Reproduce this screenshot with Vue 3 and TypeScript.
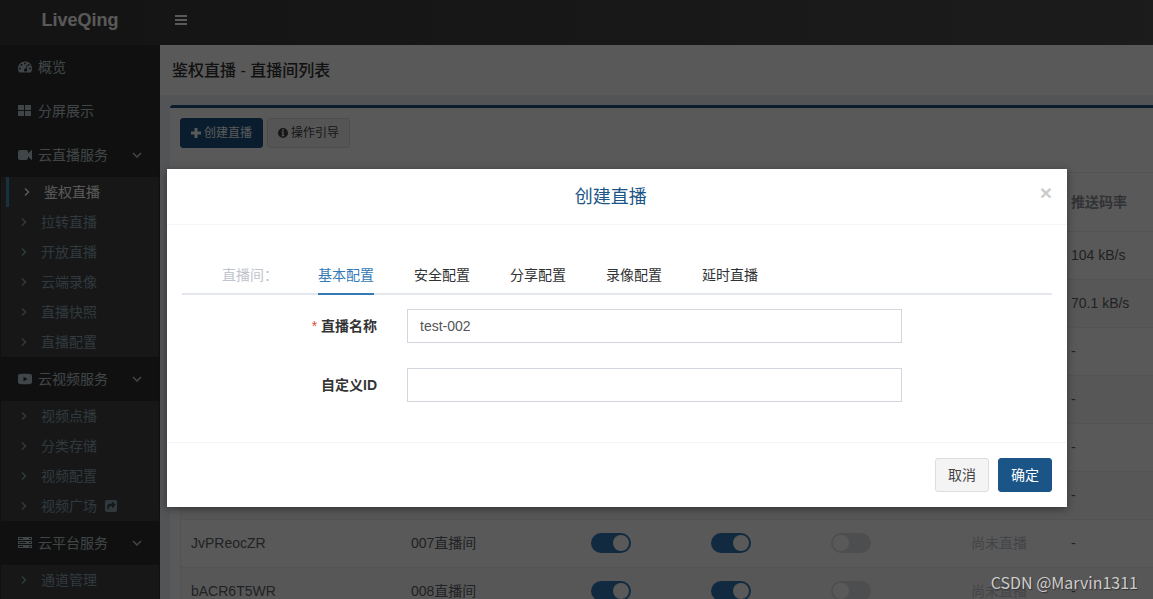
<script setup lang="ts">
import { ref } from 'vue'

interface SubItem { label: string; active?: boolean; share?: boolean }
interface MenuItem { label: string; icon: string; children?: SubItem[] }
interface Room { id: string; name: string; status: string; rate: string }

const menu: MenuItem[] = [
  { label: '概览', icon: 'dashboard' },
  { label: '分屏展示', icon: 'grid' },
  {
    label: '云直播服务', icon: 'camera', children: [
      { label: '鉴权直播', active: true }, { label: '拉转直播' }, { label: '开放直播' },
      { label: '云端录像' }, { label: '直播快照' }, { label: '直播配置' },
    ],
  },
  {
    label: '云视频服务', icon: 'video', children: [
      { label: '视频点播' }, { label: '分类存储' }, { label: '视频配置' }, { label: '视频广场', share: true },
    ],
  },
  { label: '云平台服务', icon: 'server', children: [{ label: '通道管理' }] },
]

const rooms: Room[] = [
  { id: '', name: '', status: '', rate: '104 kB/s' },
  { id: '', name: '', status: '', rate: '70.1 kB/s' },
  { id: '', name: '', status: '', rate: '-' },
  { id: '', name: '', status: '', rate: '-' },
  { id: '', name: '', status: '', rate: '-' },
  { id: '', name: '', status: '', rate: '-' },
  { id: 'JvPReocZR', name: '007直播间', status: '尚未直播', rate: '-' },
  { id: 'bACR6T5WR', name: '008直播间', status: '尚未直播', rate: '-' },
]

const tabs = ['基本配置', '安全配置', '分享配置', '录像配置', '延时直播']
const activeTab = ref('基本配置')
const roomName = ref('test-002')
const customId = ref('')
</script>

<template>
  <div class="page">
    <header class="topbar">
      <a class="brand" href="#">LiveQing</a>
      <button class="burger" type="button" aria-label="菜单">
        <svg width="12" height="10" viewBox="0 0 12 10"><path d="M0 0h12v2H0zM0 4h12v2H0zM0 8h12v2H0z" /></svg>
      </button>
    </header>

    <div class="columns">
      <nav class="sidebar">
        <div v-for="item in menu" :key="item.label" class="group">
          <a class="item" href="#">
            <svg v-if="item.icon === 'dashboard'" class="icon" viewBox="0 0 14 14">
              <path fill-rule="evenodd" d="M7 1.500a7 7 0 0 0-7 7c0 1.400.4 2.700 1.100 3.800.1.200.2.200.4.200h11c.2 0 .3 0 .4-.2A7 7 0 0 0 7 1.500zM2 7.500a1 1 0 1 1 0 2 1 1 0 0 1 0-2zM3.500 4a1 1 0 1 1 0 2 1 1 0 0 1 0-2zM7 2.500a1 1 0 1 1 0 2 1 1 0 0 1 0-2zM12 7.500a1 1 0 1 1 0 2 1 1 0 0 1 0-2zM8.700 5l.9.300-1.100 3.400a1.600 1.600 0 1 1-.9-.3zM10.700 4a1 1 0 1 1 0 2 1 1 0 0 1 0-2z" />
            </svg>
            <svg v-else-if="item.icon === 'grid'" class="icon" viewBox="0 0 14 14">
              <path d="M0 1h6v5H0zM7 1h6v5H7zM0 7h6v5H0zM7 7h6v5H7z" />
            </svg>
            <svg v-else-if="item.icon === 'camera'" class="icon" viewBox="0 0 14 14">
              <path d="M2 2h6a2 2 0 0 1 2 2v1.500L13.300 2.200q.7-.3.7.4v8.800q0 .7-.7.4L10 8.500V10a2 2 0 0 1-2 2H2a2 2 0 0 1-2-2V4a2 2 0 0 1 2-2z" />
            </svg>
            <svg v-else-if="item.icon === 'video'" class="icon" viewBox="0 0 14 14">
              <path fill-rule="evenodd" d="M2 2Q7 1.600 12 2q2 0 2 2 .3 3 0 6 0 2-2 2-5 .4-10 0-2 0-2-2-.3-3 0-6 0-2 2-2zM5.500 4.700v4.600L9.500 7z" />
            </svg>
            <svg v-else class="icon" viewBox="0 0 14 14">
              <path fill-rule="evenodd" d="M0 1h14v3H0zM1 2v1h4V2zM11 2v1h2V2zM0 5h14v3H0zM1 6v1h7V6zM11 6v1h2V6zM0 9h14v3H0zM1 10v1h4v-1zM11 10v1h2v-1z" />
            </svg>
            <span>{{ item.label }}</span>
            <svg v-if="item.children" class="fold" width="10" height="6" viewBox="0 0 10 6"><path d="M1 1l4 4 4-4" /></svg>
          </a>
          <ul v-if="item.children" class="sub">
            <li v-for="child in item.children" :key="child.label">
              <a href="#" :class="{ active: child.active }">
                <svg class="arrow" width="6" height="8" viewBox="0 0 6 8"><path d="M1 0.500l3.500 3.500L1 7.500" /></svg>
                <span>{{ child.label }}</span>
                <svg v-if="child.share" class="share" width="12" height="12" viewBox="0 0 12 12">
                  <path fill-rule="evenodd" d="M2 0h8a2 2 0 0 1 2 2v8a2 2 0 0 1-2 2H2a2 2 0 0 1-2-2V2a2 2 0 0 1 2-2zM7 1.500v2C3.500 3.500 2 5 2 7.200c0 1.200.5 2.200 1.500 3C3.200 7.500 4 6 7 6v2.200L10.800 4.800z" />
                </svg>
              </a>
            </li>
          </ul>
        </div>
      </nav>

      <main class="main">
        <h1 class="heading">鉴权直播 - 直播间列表</h1>
        <section class="box">
          <div class="tools">
            <button class="tool primary" type="button">
              <svg width="10" height="10" viewBox="0 0 10 10"><path d="M3.500 0h3v3.500H10v3H6.500V10h-3V6.500H0v-3h3.500z" /></svg>
              <span>创建直播</span>
            </button>
            <button class="tool" type="button">
              <svg width="10" height="10" viewBox="0 0 10 10"><path fill-rule="evenodd" d="M5 0a5 5 0 1 1 0 10A5 5 0 0 1 5 0zM4.200 1.300v1.400h1.600V1.300zM3.500 3.500v1h.8v2.800h-.8v1h3v-1h-.8V3.500z" /></svg>
              <span>操作引导</span>
            </button>
          </div>
          <table class="rooms">
            <colgroup>
              <col class="c-id"><col class="c-name"><col class="c-switch"><col class="c-switch"><col class="c-wide"><col class="c-status"><col>
            </colgroup>
            <thead>
              <tr><th></th><th></th><th></th><th></th><th></th><th></th><th>推送码率</th></tr>
            </thead>
            <tbody>
              <tr v-for="(room, i) in rooms" :key="i">
                <td>{{ room.id }}</td>
                <td>{{ room.name }}</td>
                <td><input class="switch" type="checkbox" checked :aria-label="room.name"></td>
                <td><input class="switch" type="checkbox" checked :aria-label="room.name"></td>
                <td><input class="switch" type="checkbox" :aria-label="room.name"></td>
                <td class="muted">{{ room.status }}</td>
                <td>{{ room.rate }}</td>
              </tr>
            </tbody>
          </table>
        </section>
      </main>
    </div>

    <div class="overlay">
      <form class="dialog" role="dialog" aria-labelledby="dialog-title" @submit.prevent>
        <div class="dialog-head">
          <h2 id="dialog-title">创建直播</h2>
          <button class="close" type="button" aria-label="关闭">×</button>
        </div>
        <div class="dialog-body">
          <div class="tabs" role="tablist">
            <button class="tab" type="button" disabled>直播间：</button>
            <button
              v-for="tab in tabs" :key="tab" type="button" role="tab" class="tab"
              :class="{ current: tab === activeTab }" :aria-selected="tab === activeTab" @click="activeTab = tab"
            >{{ tab }}</button>
          </div>
          <div class="field">
            <label for="room-name"><span class="required">*</span> 直播名称</label>
            <input id="room-name" v-model="roomName" type="text">
          </div>
          <div class="field">
            <label for="custom-id">自定义ID</label>
            <input id="custom-id" v-model="customId" type="text">
          </div>
        </div>
        <div class="dialog-foot">
          <button class="btn" type="button">取消</button>
          <button class="btn confirm" type="submit">确定</button>
        </div>
      </form>
    </div>

    <div class="watermark">CSDN @Marvin1311</div>
  </div>
</template>

<style>
body { margin: 0; overflow: hidden; }
</style>

<style scoped>
.page {
  position: relative;
  height: 100vh;
  overflow: hidden;
  display: flex;
  flex-direction: column;
  background: #ecf0f5;
  color: #333;
  font: 14px/20px "Liberation Sans", "Noto Sans CJK SC", sans-serif;
}
.page * { box-sizing: border-box; }
button, input { font: inherit; color: inherit; margin: 0; }
a { color: inherit; text-decoration: none; }
svg { fill: currentColor; flex: none; }

.topbar {
  flex: none;
  display: flex;
  align-items: center;
  height: 45px;
  padding-bottom: 5px;
  background: linear-gradient(to right, #393939, #505050);
  color: #fff;
}
.brand { width: 160px; text-align: center; font-size: 18px; font-weight: bold; }
.burger { display: flex; padding: 0 15px; border: 0; background: none; }

.columns { flex: 1; min-height: 0; display: flex; }
.sidebar { flex: none; display: flex; flex-direction: column; width: 160px; background: #303030; color: #b8c7ce; }
.group { flex: none; display: flex; flex-direction: column; }
.group:last-child { flex: 1; }
.group:last-child .sub { flex: 1; }
.item { display: flex; align-items: center; height: 44px; padding: 0 18px; }
.icon { width: 14px; height: 14px; margin-right: 6px; }
.fold { margin-left: auto; }
.fold path, .arrow path { fill: none; stroke: currentColor; stroke-width: 1.5; }
.sub { margin: 0 1px; padding: 0; list-style: none; background: #424242; color: #8aa4af; }
.sub a { display: flex; align-items: center; height: 30px; padding-left: 20px; }
.sub a.active { margin-left: 5px; padding-left: 15px; border-left: 3px solid #3c8dbc; color: #fff; }
.arrow { margin-right: 14px; }
.share { margin-left: 8px; }

.main { flex: 1; min-width: 0; overflow: hidden; }
.heading { margin: 0; padding: 14px 12px 12px; background: #fff; color: #333; font-size: 16px; line-height: 24px; font-weight: 500; }
.box { margin: 10px 0 0 10px; padding: 10px 0 0 10px; border-top: 3px solid #1b5487; border-top-left-radius: 3px; background: #fff; }
.tools { display: flex; gap: 4px; margin-bottom: 24px; }
.tool {
  display: flex; align-items: center; gap: 3px; height: 30px; padding: 0 10px;
  border: 1px solid #ddd; border-radius: 3px; background: #f4f4f4; color: #444; font-size: 12px;
}
.tool.primary { border-color: #1b5487; background: #1b5487; color: #fff; }

.rooms { width: 100%; table-layout: fixed; border-collapse: separate; border-spacing: 0; border: 1px solid #ebeef5; border-right: 0; }
.c-id { width: 220px; }
.c-name { width: 180px; }
.c-switch { width: 120px; }
.c-wide { width: 140px; }
.c-status { width: 100px; }
.rooms th, .rooms td { height: 48px; padding: 0 10px 1px; border-bottom: 1px solid #ebeef5; text-align: left; white-space: nowrap; color: #606266; }
.rooms th { height: 59px; color: #909399; }
.rooms td { vertical-align: middle; }
.rooms tbody tr:nth-child(even) td { background: #fafafa; }
.rooms .muted { color: #c0c4cc; }
.switch {
  display: block; appearance: none; width: 40px; height: 20px; padding: 2px; border-radius: 10px; background: #dcdfe6;
}
.switch::before { content: ""; display: block; width: 16px; height: 16px; border-radius: 50%; background: #fff; }
.switch:checked { background: #337ab7; }
.switch:checked::before { margin-left: auto; }

.overlay {
  position: absolute; inset: 0; display: flex; justify-content: center; align-items: flex-start;
  padding: 169px 0 0 81px; background: rgba(0, 0, 0, 0.65);
}
.dialog { width: 100%; max-width: 900px; background: #fff; box-shadow: 0 2px 8px rgba(0, 0, 0, 0.4); }
.dialog-head { display: flex; align-items: center; height: 56px; padding: 0 15px; border-bottom: 1px solid #f4f4f4; }
.dialog-head h2 { flex: 1; margin: 0; text-align: center; font-size: 18px; line-height: 24px; font-weight: 400; color: #1b5487; }
.close { padding: 0 0 8px; border: 0; background: none; color: #ccc; font-size: 21px; font-weight: bold; line-height: 20px; }
.dialog-body { padding: 30px 15px 15px; }
.tabs { display: flex; gap: 40px; padding: 0 40px; margin-bottom: 14px; border-bottom: 2px solid #e4e7ed; }
.tab { height: 40px; width: 56px; padding: 2px 0 0; margin-bottom: -2px; border: 0; border-bottom: 2px solid transparent; background: none; color: #303133; white-space: nowrap; }
.tab:disabled { color: #c0c4cc; }
.tab.current { border-color: #337ab7; color: #337ab7; }
.field { display: grid; grid-template-columns: 3fr 7fr 2fr; align-items: center; margin: 0 -15px 25px; }
.field label { padding-right: 15px; text-align: right; font-weight: bold; }
.required { color: #dd4b39; font-weight: 400; }
.field input { height: 34px; margin: 0 15px; padding: 0 12px; min-width: 0; border: 1px solid #d2d6de; background: #fff; color: #555; outline: 0; }
.dialog-foot { display: flex; justify-content: flex-end; gap: 9px; padding: 15px; border-top: 1px solid #f4f4f4; }
.btn { height: 34px; padding: 0 12px; border: 1px solid #ddd; border-radius: 3px; background: #f4f4f4; color: #444; }
.btn.confirm { border-color: #1b5487; background: #1b5487; color: #fff; }

.watermark {
  position: absolute; right: 15px; bottom: 5px; color: #ccc; font-family: "Noto Sans CJK SC", sans-serif;
  font-size: 16px; line-height: 24px; text-shadow: 1px 1px 1px #333;
}
</style>
